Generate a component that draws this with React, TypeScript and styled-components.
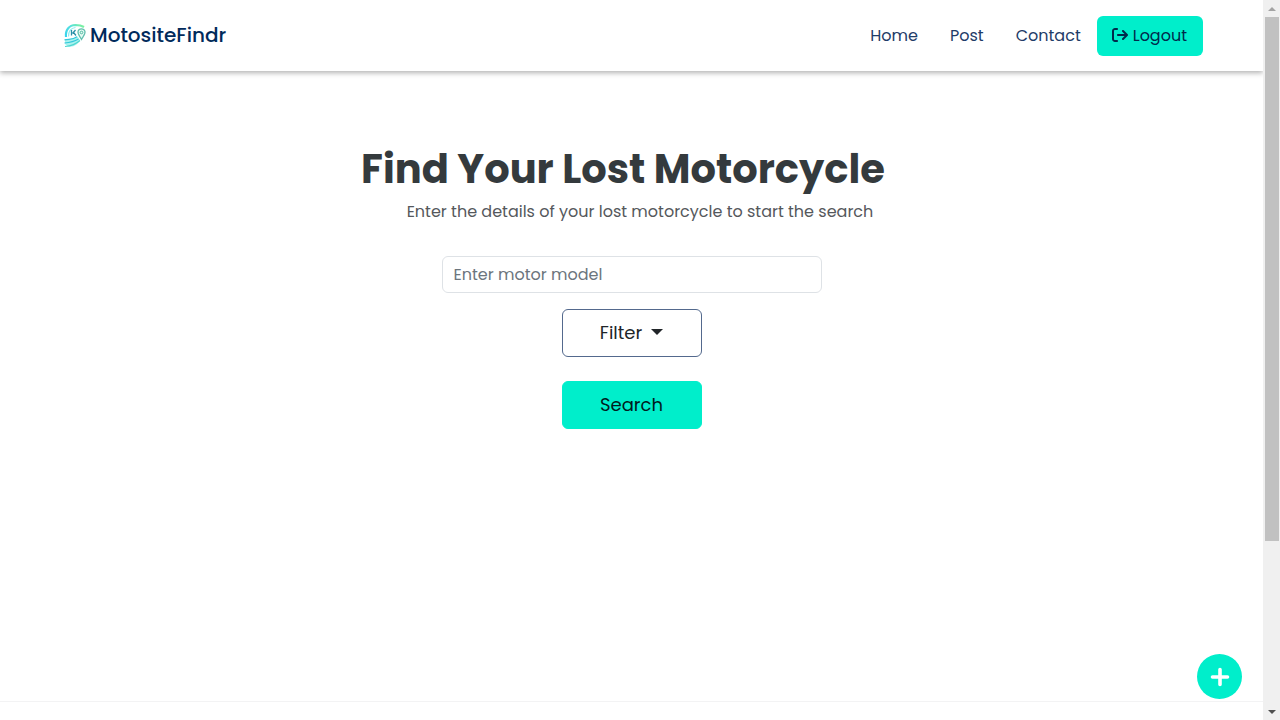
import React from 'react';
import styled, { createGlobalStyle } from 'styled-components';
import { FaArrowRightFromBracket } from 'react-icons/fa6';

const GlobalStyle = createGlobalStyle`
  *, *::before, *::after { box-sizing: border-box; }
  body {
    margin: 0;
    background: #fff;
    color: #343a40;
    font-family: Poppins, Inter, sans-serif;
    font-size: 16px;
    line-height: 24px;
  }
  button, input { font: inherit; }
`;

const Shell = styled.div`
  display: grid;
  grid-template-columns: minmax(0, 1fr) 17px;
  min-height: 100vh;
`;

const Page = styled.div`
  display: flex;
  flex-direction: column;
`;

const Header = styled.header`
  display: flex;
  align-items: center;
  justify-content: space-between;
  padding: 16px 60px 15px 64px;
  box-shadow: 0 2px 5px rgba(0, 0, 0, 0.3);
`;

const Brand = styled.a`
  display: flex;
  align-items: center;
  gap: 4px;
  color: #012a5b;
  font-size: 20px;
  font-weight: 500;
  line-height: 24px;
  padding-bottom: 2px;
  text-decoration: none;
`;

const Nav = styled.nav`
  display: flex;
  align-items: center;
`;

const NavLink = styled.a`
  padding: 8px 16px;
  color: #1f3c68;
  text-decoration: none;
`;

const LogoutButton = styled.button`
  display: flex;
  align-items: center;
  gap: 5px;
  height: 40px;
  padding: 0 16px 0 15px;
  border: 0;
  border-radius: 6px;
  background: #00eecb;
  color: #012a4b;
  svg { margin-bottom: 2px; }
`;

const Main = styled.main`
  flex: 1;
  display: flex;
  flex-direction: column;
  align-items: center;
  padding: 74px 16px 48px;
`;

const Title = styled.h1`
  margin: 0;
  padding-right: 17px;
  color: #343a3d;
  font-size: 40px;
  font-weight: 700;
  line-height: 48px;
`;

const Lead = styled.p`
  margin: 7px 0 32px;
  padding-left: 17px;
  color: #55585c;
`;

const SearchForm = styled.form`
  display: flex;
  flex-direction: column;
  align-items: center;
  width: 100%;
  max-width: 380px;
`;

const ModelInput = styled.input`
  width: 100%;
  height: 37px;
  margin-bottom: 16px;
  padding: 0 11px;
  border: 1px solid #dee2e6;
  border-radius: 6px;
  background: #fff;
  color: #212529;
  &::placeholder { color: #6c757d; opacity: 1; }
`;

const ActionButton = styled.button<{ $filled?: boolean }>`
  display: flex;
  align-items: center;
  justify-content: center;
  gap: 9px;
  width: 140px;
  height: 48px;
  margin-bottom: 24px;
  padding: 0;
  border: 1px solid ${p => (p.$filled ? '#00eecb' : '#53698d')};
  border-radius: 6px;
  background: ${p => (p.$filled ? '#00eecb' : '#fff')};
  color: ${p => (p.$filled ? '#001b20' : '#212529')};
  font-size: 18px;
`;

const Caret = styled.span`
  margin-bottom: 2px;
  border-top: 6px solid #212529;
  border-right: 6px solid transparent;
  border-left: 6px solid transparent;
`;

const Footer = styled.footer`
  height: 19px;
  border-top: 1px solid #f3f3f4;
`;

const AddButton = styled.button`
  position: fixed;
  right: 38px;
  bottom: 21px;
  display: grid;
  place-items: center;
  width: 45px;
  height: 45px;
  padding: 0;
  border: 0;
  border-radius: 50%;
  background: #00eecb;
  color: #fff;
`;

const ScrollTrack = styled.div`
  position: sticky;
  top: 0;
  display: grid;
  grid-template-rows: 17px 1fr 17px;
  height: 100vh;
  background: #f0f0f0;
`;

const ScrollRail = styled.div`
  padding: 0 1px 0 2px;
`;

const ScrollThumb = styled.div`
  height: 76.4%;
  background: #c1c1c1;
`;

const ScrollArrow = styled.span<{ $down?: boolean }>`
  place-self: center;
  border: 4px solid transparent;
  border-${p => (p.$down ? 'top' : 'bottom')}-color: ${p => (p.$down ? '#505050' : '#a3a3a3')};
  border-${p => (p.$down ? 'bottom' : 'top')}-width: 0;
`;

function Logo() {
  return (
    <svg width="22" height="26" viewBox="0 0 22 26" fill="none" aria-hidden="true">
      <defs>
        <linearGradient id="ring" x1="1" y1="18" x2="19" y2="3" gradientUnits="userSpaceOnUse">
          <stop stopColor="#2fd0f2" />
          <stop offset="0.55" stopColor="#56e0de" />
          <stop offset="1" stopColor="#7df29c" />
        </linearGradient>
      </defs>
      <path d="M2 15C1.200 8 5 3.200 11.500 3c3 0 5.500.2 8.500 2" stroke="url(#ring)" strokeWidth="2.200" />
      <path d="M4.500 14.500C4.500 9.500 7 6 11.500 5.500" stroke="#8cecf0" strokeWidth="1.200" />
      <path d="M7.500 8v5.500M8.500 11.500l3-3.500M9.500 10.500l2.500 3" stroke="#2a8fa8" strokeWidth="1.300" />
      <path d="M17.500 17.500c-1.500-3-4-5.500-3.500-8 .8-3.500 6-3.500 7 0 .5 2.500-2 5-3.500 8Z" fill="#e6fbf4" stroke="#62bfae" strokeWidth="1.200" />
      <circle cx="17.500" cy="10.500" r="1.300" stroke="#4fb9a0" />
      <path d="M1 17.500c5-1 8 1 12-3.500l3 4c-2 4-6 7.500-12 6.500L1 22Z" fill="#a9f2ee" />
      <path d="M.5 17.800c5-1 8 .2 12.500-3M.5 21c6-.5 9-1 14-4" stroke="#30c8dc" strokeWidth="1.200" />
      <path d="M1 24.500c6-.5 10-1.500 15-6" stroke="#4cd6cf" strokeWidth="1.200" />
    </svg>
  );
}

function PlusIcon() {
  return (
    <svg width="20" height="20" viewBox="0 0 20 20" fill="none" aria-hidden="true">
      <path d="M10 2.500v15M2.500 10h15" stroke="currentColor" strokeWidth="3.600" strokeLinecap="round" />
    </svg>
  );
}

export default function App() {
  return (
    <>
      <GlobalStyle />
      <Shell>
        <Page>
          <Header>
            <Brand href="#"><Logo />MotositeFindr</Brand>
            <Nav>
              <NavLink href="#">Home</NavLink>
              <NavLink href="#">Post</NavLink>
              <NavLink href="#">Contact</NavLink>
              <LogoutButton type="button"><FaArrowRightFromBracket aria-hidden />Logout</LogoutButton>
            </Nav>
          </Header>
          <Main>
            <Title>Find Your Lost Motorcycle</Title>
            <Lead>Enter the details of your lost motorcycle to start the search</Lead>
            <SearchForm onSubmit={e => e.preventDefault()}>
              <ModelInput type="text" aria-label="Motor model" placeholder="Enter motor model" />
              <ActionButton type="button" aria-haspopup="true">Filter<Caret /></ActionButton>
              <ActionButton type="submit" $filled>Search</ActionButton>
            </SearchForm>
          </Main>
          <Footer />
        </Page>
        <ScrollTrack aria-hidden="true">
          <ScrollArrow />
          <ScrollRail><ScrollThumb /></ScrollRail>
          <ScrollArrow $down />
        </ScrollTrack>
      </Shell>
      <AddButton type="button" aria-label="Add post"><PlusIcon /></AddButton>
    </>
  );
}
